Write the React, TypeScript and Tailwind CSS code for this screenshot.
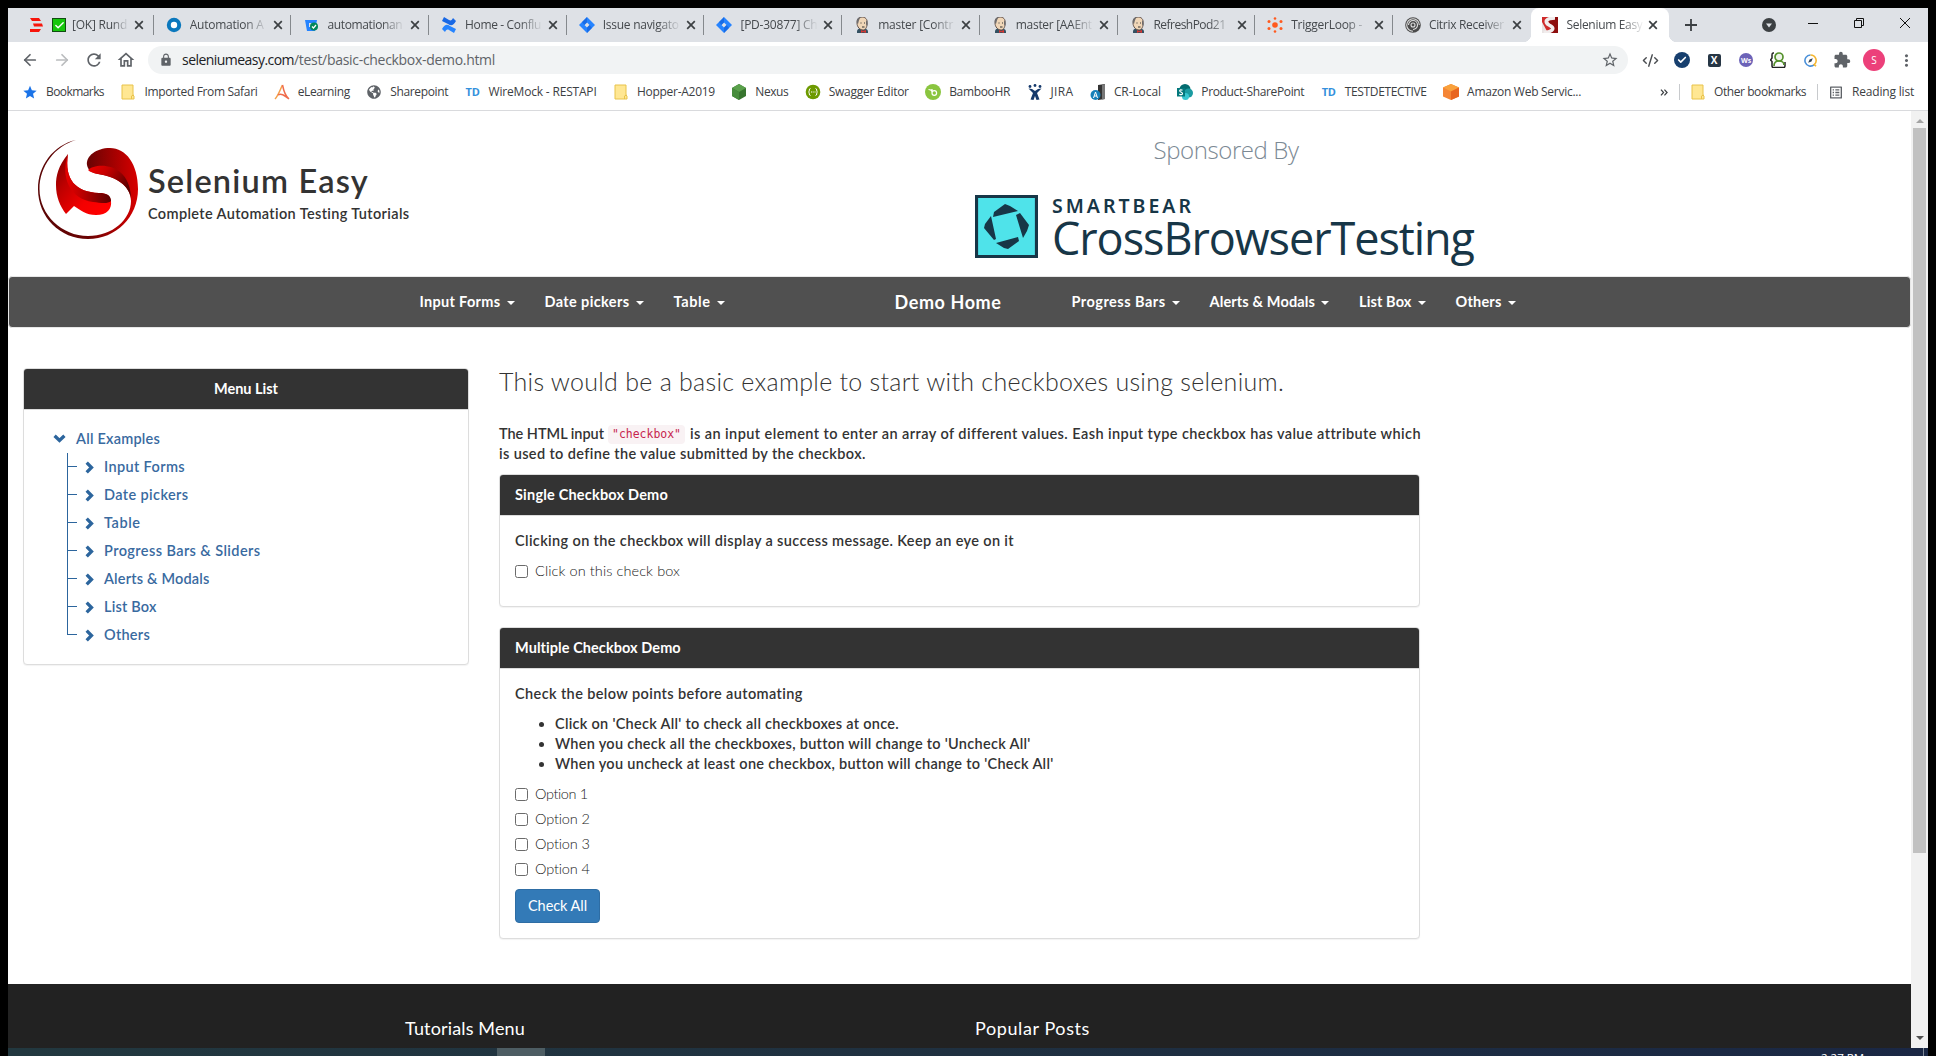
import { useLayoutEffect, useRef, type ReactNode } from "react";
import { ArrowLeft, ArrowRight, Check, CodeXml } from "lucide-react";
import { MdExtension, MdLock, MdMoreVert, MdOutlineHome, MdRefresh, MdStar, MdStarBorder, MdOutlineListAlt } from "react-icons/md";
import { FaGlobeAmericas } from "react-icons/fa";

/* One line of text whose tracking is adjusted so that it spans `w` pixels. */
function Fit({ w, className = "", children }: { w: number; className?: string; children: string }) {
  const ref = useRef<HTMLSpanElement>(null);
  useLayoutEffect(() => {
    const el = ref.current;
    if (!el) return;
    el.style.letterSpacing = "0px";
    const natural = el.getBoundingClientRect().width;
    el.style.letterSpacing = `${(w - natural) / children.length}px`;
  }, [w, children]);
  return (
    <span ref={ref} className={`inline-block whitespace-pre ${className}`}>
      {children}
    </span>
  );
}

/* ---------- favicons ---------- */

const Rundeck = () => (
  <svg viewBox="0 0 16 16" className="size-4">
    <path d="M2 1h9l2 3H4zM5 6.500h9l1 3H6zM2 12h11l-2 3H2z" fill="#f7150b" />
  </svg>
);
const Ring = () => (
  <svg viewBox="0 0 16 16" className="size-4">
    <circle cx="8" cy="8" r="5.200" fill="#fff" stroke="#0b78bd" strokeWidth="4" />
  </svg>
);
const Bitbucket = () => (
  <svg viewBox="0 0 16 16" className="size-4">
    <path d="M2 3h12l-2 11H4z" fill="#2684ff" />
    <path d="M6 6h4v4H6z" fill="#dee1e6" />
    <circle cx="11" cy="9.500" r="4" fill="#00875a" />
    <path d="m9 9.500 1.500 1.500 2.500-3" stroke="#fff" fill="none" strokeWidth="1.200" />
  </svg>
);
const Confluence = () => (
  <svg viewBox="0 0 16 16" className="size-4">
    <path d="M1 12c3-5 5-5 8-3l6 3-2 4-5-3c-2-1-3 0-4 2z" fill="#2684ff" />
    <path d="M15 4c-3 5-5 5-8 3L1 4l2-4 5 3c2 1 3 0 4-2z" fill="#1868e5" />
  </svg>
);
const JiraDiamond = () => (
  <svg viewBox="0 0 16 16" className="size-4">
    <path d="M8 0 16 8 8 16 0 8z" fill="#2684ff" />
    <path d="M8 5.500 10.500 8 8 10.500 5.500 8z" fill="#dee1e6" />
    <path d="M8 0v5.500L5.500 8 3 5zM8 16v-5.500L10.500 8 13 11z" fill="#0f5bd6" opacity=".6" />
  </svg>
);
const Jenkins = () => (
  <svg viewBox="0 0 16 16" className="size-4">
    <path d="M3 15c0-3 2-4 5-4s6 1 6 4v1H3z" fill="#335061" />
    <path d="M3 6c0-4 2-6 5-6s6 2 5 7c0 4-2 6-4 6-3 0-6-3-6-7z" fill="#f0d6b7" stroke="#5b4a42" strokeWidth=".9" />
    <path d="M3 6C2 2 4 0 8 0 5 1 5 4 4 7zM12 3c2 2 2 5 1 6l-1-2z" fill="#6d6b6d" />
    <path d="M6.500 6h1M10 6h1M8 10h2.500" stroke="#333" />
    <path d="m7 13 2 1 3-1v3l-3-1-2 1z" fill="#d33833" />
  </svg>
);
const Trigger = () => (
  <svg viewBox="0 0 16 16" className="size-4" fill="#ff5a1f">
    <circle cx="8" cy="8" r="2.800" />
    <circle cx="8" cy="1.500" r="1.300" />
    <circle cx="8" cy="14.500" r="1.300" />
    <circle cx="2" cy="4.500" r="1.500" />
    <circle cx="14" cy="4.500" r="1.500" />
    <circle cx="2" cy="11.500" r="1.500" />
    <circle cx="14" cy="11.500" r="1.500" />
  </svg>
);
const Citrix = () => (
  <svg viewBox="0 0 16 16" className="size-4">
    <circle cx="8" cy="8" r="7.800" fill="#4b4b4b" />
    <g fill="none" stroke="#ddd" strokeWidth="1.100">
      <circle cx="8" cy="8" r="2" />
      <path d="M3.500 8A4.500 4.500 0 1 1 8 12.500M8 14.300A6.300 6.300 0 1 1 14.300 8" />
    </g>
  </svg>
);
const SeleniumTab = () => (
  <svg viewBox="0 0 16 16" className="size-4">
    <path d="M0 0h16v16H0z" fill="#cf2b2b" />
    <path d="M6 0h10v16H9z" fill="#8d0d0d" />
    <path d="M0 5v11h6z" fill="#e9e4e4" />
    <path d="M13 1C4 1 2 5 7 8c6 3 5 6-5 8" fill="none" stroke="#f1eded" strokeWidth="3.600" />
  </svg>
);

const tabs: { icon: ReactNode; title: string; w: number; ok?: boolean }[] = [
  { icon: <Rundeck />, title: "[OK] Rund", w: 55, ok: true },
  { icon: <Ring />, title: "Automation A", w: 74 },
  { icon: <Bitbucket />, title: "automationan", w: 75 },
  { icon: <Confluence />, title: "Home - Conflu", w: 76 },
  { icon: <JiraDiamond />, title: "Issue navigato", w: 76 },
  { icon: <JiraDiamond />, title: "[PD-30877] Ch", w: 77 },
  { icon: <Jenkins />, title: "master [Contr", w: 75 },
  { icon: <Jenkins />, title: "master [AAEnt", w: 76 },
  { icon: <Jenkins />, title: "RefreshPod21", w: 72 },
  { icon: <Trigger />, title: "TriggerLoop -", w: 71 },
  { icon: <Citrix />, title: "Citrix Receiver", w: 75 },
];

const TabX = () => (
  <svg viewBox="0 0 10 10" className="size-[10px] shrink-0">
    <path d="m1.200 1.200 7.600 7.600m0-7.600L1.200 8.800" stroke="#3c4043" strokeWidth="1.700" />
  </svg>
);

function TabTitle({ w, children }: { w: number; children: string }) {
  return (
    <span className="flex-1 overflow-hidden text-[#45494d] [mask-image:linear-gradient(to_right,#000_70%,transparent_100%)]">
      <Fit w={w}>{children}</Fit>
    </span>
  );
}

function TabStrip() {
  return (
    <div className="flex h-[34px] bg-[#dee1e6] pl-[8px] text-[12px] leading-[34px]">
      {tabs.map((t, i) => (
        <div key={i} className="flex w-[137.700px] items-center pl-[12px]">
          <span className="shrink-0">{t.icon}</span>
          {t.ok && (
            <span className="ml-[8px] flex size-[14px] shrink-0 items-center justify-center border border-[#114d11] bg-[#16c60c]">
              <Check className="size-[11px] text-white" strokeWidth={3} />
            </span>
          )}
          <span className={t.ok ? "ml-[6px] flex w-[57px]" : "ml-[8px] flex w-[78px]"}>
            <TabTitle w={t.w}>{t.title}</TabTitle>
          </span>
          <span className="ml-[5px] mr-auto">
            <TabX />
          </span>
          {i < 10 && <span className="h-[20px] w-px bg-[#85898d]" />}
        </div>
      ))}
      <div className="relative flex w-[138px] items-center rounded-t-lg bg-white pl-[11px]">
        <span className="absolute bottom-0 left-[-8px] size-2 bg-[radial-gradient(circle_at_0_0,#dee1e6_8px,#fff_8.500px)]" />
        <span className="absolute bottom-0 right-[-8px] size-2 bg-[radial-gradient(circle_at_100%_0,#dee1e6_8px,#fff_8.500px)]" />
        <SeleniumTab />
        <span className="ml-[9px] flex w-[77px]">
          <TabTitle w={76}>Selenium Easy</TabTitle>
        </span>
        <span className="ml-[4px] flex">
          <TabX />
        </span>
      </div>
      <div className="flex flex-1 items-center">
        <svg viewBox="0 0 12 12" className="ml-[16px] size-3">
          <path d="M6 0v12M0 6h12" stroke="#3c4043" strokeWidth="1.800" />
        </svg>
        <svg viewBox="0 0 14 14" className="ml-[65px] size-[14px]">
          <circle cx="7" cy="7" r="7" fill="#3c4043" />
          <path d="M4 5.500h6L7 9.500z" fill="#dee1e6" />
        </svg>
        <svg viewBox="0 0 10 10" className="mb-[5px] ml-[32px] size-[10px]">
          <path d="M0 5.500h10" stroke="#111" />
        </svg>
        <svg viewBox="0 0 10 10" className="mb-[5px] ml-[36px] size-[10px]" fill="none" stroke="#111">
          <path d="M.5 2.500h7v7h-7zM2.500 2.500v-2h7v7h-2" />
        </svg>
        <svg viewBox="0 0 10 10" className="mb-[5px] ml-[36px] size-[10px]">
          <path d="m0 0 10 10M10 0 0 10" stroke="#111" />
        </svg>
      </div>
    </div>
  );
}

const extensions: ReactNode[] = [
  <CodeXml className="size-[17px] text-[#4a4d51]" />,
  <span className="flex size-4 items-center justify-center rounded-full bg-[#173f6e]">
    <Check className="size-[10px] text-white" strokeWidth={4} />
  </span>,
  <span className="flex size-[13px] items-center justify-center rounded-[2px] bg-[#263645] text-[10px] font-bold leading-none text-white">
    X
  </span>,
  <span className="flex size-[14px] items-center justify-center rounded-full bg-[#6c63b8] text-[7px] font-bold leading-none text-white">
    Ws
  </span>,
  <svg viewBox="0 0 16 16" className="size-4" fill="none">
    <path d="M4 1H3c-1 0-1 1-1 2v3L.5 8 2 9.500V14c0 1 .5 1.500 1.500 1.500H14c1 0 1-1 1-2V10" stroke="#222" strokeWidth="1.500" />
    <circle cx="9" cy="5" r="4" stroke="#55912c" strokeWidth="1.700" fill="#eef4ea" />
    <path d="M4 14c0-3 2-5 5-5s5 2 5 4" stroke="#55912c" strokeWidth="1.700" />
  </svg>,
  <svg viewBox="0 0 14 14" className="size-[13px]" fill="none" strokeWidth="1.700">
    <path d="M7 1a6 6 0 1 0 4 10.500" stroke="#4a90d9" />
    <path d="M7 1a6 6 0 0 1 4 10.500L13 13" stroke="#f5b731" />
    <path d="M9.500 4.500 8 8 4.500 9.500 6 6z" fill="#345" />
  </svg>,
  <MdExtension className="size-[18px]" />,
  <span className="flex size-[22px] items-center justify-center rounded-full bg-[#ec407a] text-[10px] leading-none text-white">
    S
  </span>,
  <MdMoreVert className="size-[19px]" />,
];

function Toolbar() {
  return (
    <div className="flex h-[36px] items-center pl-[13px] text-[#5f6368]">
      <ArrowLeft className="size-[18px]" strokeWidth={2.3} />
      <ArrowRight className="ml-[14px] size-[18px] text-[#babcbe]" strokeWidth={2.3} />
      <MdRefresh className="ml-[13px] size-[20px]" />
      <MdOutlineHome className="ml-[12px] size-[20px]" />
      <div className="ml-[12px] flex h-[28px] w-[1480px] items-center rounded-full bg-[#f1f3f4] pl-[11px] pr-[9px]">
        <MdLock className="size-[14px]" />
        <span className="ml-[9px] flex text-[14px] leading-[28px]">
          <Fit w={112} className="text-[#202124]">seleniumeasy.com</Fit>
          <Fit w={201}>/test/basic-checkbox-demo.html</Fit>
        </span>
        <MdStarBorder className="ml-auto size-[18px]" />
      </div>
      <div className="ml-[6px] flex">
        {extensions.map((e, i) => (
          <span key={i} className="flex w-8 items-center justify-center">
            {e}
          </span>
        ))}
      </div>
    </div>
  );
}

/* ---------- bookmarks ---------- */

const Folder = () => (
  <svg viewBox="0 0 16 16" className="size-4">
    <path d="M2 1h11v10l1 1v3H2z" fill="#ffe793" stroke="#e8c34a" />
    <path d="M11.500 15v-3l2-1" fill="none" stroke="#e8c34a" />
  </svg>
);
const ALetter = () => (
  <svg viewBox="0 0 16 16" className="size-4" fill="none" strokeWidth="1.500">
    <path d="M1 15C4 12 6 6 8.500 1" stroke="#f5a04a" />
    <path d="M8.500 1C9.500 6 11 12 15 15M4 11c3-2 6 0 11 4" stroke="#ef6c4d" />
  </svg>
);
const TD = () => <span className="flex w-4 justify-center text-[11px] font-bold tracking-tight text-[#3490dc]">TD</span>;
const Hexagon = () => (
  <svg viewBox="0 0 16 16" className="size-4">
    <path d="M8 0 15 4v8l-7 4-7-4V4z" fill="#38752f" />
    <path d="M8 0 15 4 8 8 1 4z" fill="#5aa04b" />
    <path d="M8 8v8l-7-4V4z" fill="#478c3c" />
  </svg>
);
const Swagger = () => (
  <svg viewBox="0 0 16 16" className="size-4">
    <circle cx="8" cy="8" r="7.300" fill="#6d9a00" />
    <path d="M5.500 4.500c-2 0-.5 3-2 3.500 1.500.5 0 3.500 2 3.500m5-7c2 0 .5 3 2 3.500-1.500.5 0 3.500-2 3.500M6 8h1m.7 0h1m.8 0h1" stroke="#fff" fill="none" />
  </svg>
);
const Bamboo = () => (
  <svg viewBox="0 0 16 16" className="size-4">
    <circle cx="8" cy="8" r="8" fill="#8ac53f" />
    <path d="M3.500 5.500c2 0 3 .5 3.500 2M7 5v4a2.300 2.300 0 1 0 2.300-2.300C8 6.700 7 7.500 7 9" stroke="#fff" strokeWidth="1.200" fill="none" />
  </svg>
);
const JiraOld = () => (
  <svg viewBox="0 0 16 16" className="size-4" fill="#15396b">
    <circle cx="3" cy="2.500" r="1.400" />
    <circle cx="8" cy="1.500" r="1.400" />
    <circle cx="13" cy="2.500" r="1.400" />
    <path d="M1.500 4.500 5 5l3 2 3-2 3.500-.5L10 9l2.500 6.500-3 .5L8 12l-1.500 4-3-.5L6 9z" />
  </svg>
);
const Server = () => (
  <svg viewBox="0 0 16 16" className="size-4">
    <path d="M8 1 15 0v15l-7 1z" fill="#333" />
    <path d="M12 1l3-1v15l-3 .5z" fill="#777" />
    <circle cx="5.500" cy="11" r="5" fill="#1580b8" />
    <path d="m3.500 14 2-6 2 6M4 12h3" stroke="#fff" fill="none" />
  </svg>
);
const SharePoint = () => (
  <svg viewBox="0 0 16 16" className="size-4">
    <circle cx="8" cy="5.500" r="5.500" fill="#036c70" />
    <circle cx="11.500" cy="9" r="4.500" fill="#1a9ba1" />
    <circle cx="8.500" cy="12.500" r="3.500" fill="#37c6d0" />
    <path d="M0 4h8v8.500H0z" fill="#03787c" />
    <path d="M5.500 6.200C4 5.300 2.500 6 2.700 7S5.500 8 5.500 9.500 3.500 11 2.400 10" stroke="#fff" fill="none" strokeWidth="1.200" />
  </svg>
);
const Cube = () => (
  <svg viewBox="0 0 16 16" className="size-4">
    <path d="M8 0 16 3.500v9L8 16 0 12.500v-9z" fill="#f58536" />
    <path d="M8 0 16 3.500 8 7.500 0 3.500z" fill="#f9a13b" />
    <path d="M8 7.500 16 3.500v9L8 16z" fill="#e8651f" />
  </svg>
);

const bookmarks: [ReactNode, string, number][] = [
  [<MdStar className="size-[17px] text-[#1a73e8]" />, "Bookmarks", 58],
  [<Folder />, "Imported From Safari", 113],
  [<ALetter />, "eLearning", 52],
  [<FaGlobeAmericas className="size-[14px]" />, "Sharepoint", 58],
  [<TD />, "WireMock - RESTAPI", 108],
  [<Folder />, "Hopper-A2019", 78],
  [<Hexagon />, "Nexus", 33],
  [<Swagger />, "Swagger Editor", 80],
  [<Bamboo />, "BambooHR", 61],
  [<JiraOld />, "JIRA", 23],
  [<Server />, "CR-Local", 47],
  [<SharePoint />, "Product-SharePoint", 103],
  [<TD />, "TESTDETECTIVE", 82],
  [<Cube />, "Amazon Web Servic...", 114],
];

function Bookmark({ icon, label, w }: { icon: ReactNode; label: string; w: number }) {
  return (
    <div className="flex items-center gap-2">
      <span className="flex w-4 justify-center text-[#5f6368]">{icon}</span>
      <Fit w={w}>{label}</Fit>
    </div>
  );
}

function BookmarksBar() {
  return (
    <div className="flex h-[33px] items-center border-b border-[#d9dadd] pb-[4px] pl-[14px] text-[12px] text-[#3c4043]">
      <div className="flex gap-[16.400px]">
        {bookmarks.map(([icon, label, w], i) => (
          <Bookmark key={i} icon={icon} label={label} w={w} />
        ))}
      </div>
      <svg viewBox="0 0 9 8" className="ml-[79px] h-[7px] w-[8px]" fill="none" stroke="#3c4043" strokeWidth="1.400">
        <path d="m1 .8 3 3.200-3 3.200M5 .8 8 4 5 7.200" />
      </svg>
      <span className="ml-[11px] h-4 w-px bg-[#c8cacd]" />
      <div className="ml-[10px]">
        <Bookmark icon={<Folder />} label="Other bookmarks" w={92} />
      </div>
      <span className="ml-[11px] h-4 w-px bg-[#c8cacd]" />
      <div className="ml-[10px]">
        <Bookmark icon={<MdOutlineListAlt className="size-[17px]" />} label="Reading list" w={62} />
      </div>
    </div>
  );
}

/* ---------- page ---------- */

function SeleniumLogo() {
  return (
    <svg viewBox="0 0 100 100" className="size-[100px]">
      <defs>
        <linearGradient id="ring" x1="0" x2="1">
          <stop offset="0" stopColor="#5a0505" />
          <stop offset=".5" stopColor="#6a0303" />
          <stop offset=".85" stopColor="#b80000" />
          <stop offset="1" stopColor="#d80000" />
        </linearGradient>
        <linearGradient id="band" x1="0" x2="1" y2=".5">
          <stop offset="0" stopColor="#f00000" />
          <stop offset=".4" stopColor="#c80000" />
          <stop offset="1" stopColor="#5c0000" />
        </linearGradient>
        <linearGradient id="low" x1="0" x2="1" y2=".8">
          <stop offset="0" stopColor="#7a0000" />
          <stop offset=".35" stopColor="#c00000" />
          <stop offset=".7" stopColor="#f40000" />
          <stop offset="1" stopColor="#ff0000" />
        </linearGradient>
        <linearGradient id="fold" x1="0" x2="1">
          <stop offset="0" stopColor="#e80000" />
          <stop offset=".45" stopColor="#b00000" />
          <stop offset="1" stopColor="#5a0000" />
        </linearGradient>
      </defs>
      <path
        d="M38 1C15 6 0 27 0 50c0 28 22 50 50 50s50-22 50-50C100 25 88 9 72 9 58 9 48 17 49 26c1 6 6 8 11 9 20 3 33 13 33 27 0 18-18 35-43 35C24 97 1.500 76 1.500 50 1.500 27 17 7 38 1Z"
        fill="url(#ring)"
      />
      <path d="M50 31c8-8 42-8 43 28-3-15-18-22-33-24-4-.5-8-2-10-4Z" fill="url(#band)" />
      <path d="M30 15C20 27 18 37 18 46c0 12 4 21 10 29l8-8c6 4 12 9 22 9 11 0 16-6 15-14-1-6-5-8-12-8C38 53 26 41 30 15Z" fill="url(#low)" />
      <path d="M30 15C22 38 32 60 55 63c8 1 15 2 18-1 0-6-5-8-12-8C38 53 26 41 30 15Z" fill="url(#fold)" />
    </svg>
  );
}

function SmartBearMark() {
  return (
    <svg viewBox="0 0 63 63" className="size-[63px]">
      <path d="M1.500 1.500h60v60h-60z" fill="#4fe3ea" stroke="#173647" strokeWidth="3.200" />
      <path
        d="m18 22 1-5 11-8 5 2 8 5zM41 20l4-2 9 12-2 6-4 7zM21 48l22-6 1 4-11 8-4-1zM16 21l5 23-2 1L9 33l1-4z"
        fill="#173647"
      />
    </svg>
  );
}

function Header() {
  return (
    <header className="flex h-[165px] items-start pl-[30px]">
      <div className="pt-[28px]">
        <SeleniumLogo />
      </div>
      <div className="ml-[10px] w-[827px] pt-[51px] text-[#333]">
        <h1 className="h-[38px] text-[32.500px] font-semibold leading-[38px]">
          <Fit w={221}>Selenium Easy</Fit>
        </h1>
        <p className="mt-[4px] text-[14.500px] font-semibold leading-[20px]">
          <Fit w={262}>Complete Automation Testing Tutorials</Fit>
        </p>
      </div>
      <div className="font-['Open_Sans']">
        <p className="flex h-[60px] w-[502px] justify-center pt-[23px] text-[24px] font-light leading-[32px] text-[#7b8994]">
          <Fit w={145}>Sponsored By</Fit>
        </p>
        <div className="mt-[24px] flex text-[#173647]">
          <SmartBearMark />
          <div className="ml-[14px] flex flex-col items-start">
            <Fit w={142} className="h-[22px] font-['Noto_Sans'] text-[19.500px] font-semibold leading-[22px]">
              SMARTBEAR
            </Fit>
            <Fit w={422} className="mt-[-4px] h-[50px] text-[45px] leading-[50px]">
              CrossBrowserTesting
            </Fit>
          </div>
        </div>
      </div>
    </header>
  );
}

const leftNav: [string, number][] = [
  ["Input Forms", 81],
  ["Date pickers", 85],
  ["Table", 37],
];
const rightNav: [string, number][] = [
  ["Progress Bars", 94],
  ["Alerts & Modals", 105.5],
  ["List Box", 52.5],
  ["Others", 46],
];

function NavItems({ items }: { items: [string, number][] }) {
  return (
    <ul className="flex gap-[30px] text-[14.500px] font-bold">
      {items.map(([label, w]) => (
        <li key={label} className="flex items-center gap-[6px]">
          <Fit w={w}>{label}</Fit>
          <span className="mt-[2px] border-x-4 border-t-4 border-x-transparent border-t-white" />
        </li>
      ))}
    </ul>
  );
}

function NavBar() {
  return (
    <nav className="flex h-[52px] items-center rounded-[4px] border border-[#e7e7e7] bg-[#505050] pl-[410.500px] leading-[20px] text-white">
      <NavItems items={leftNav} />
      <Fit w={107} className="ml-[170px] text-[18px] font-bold">
        Demo Home
      </Fit>
      <div className="ml-[70px]">
        <NavItems items={rightNav} />
      </div>
    </nav>
  );
}

const menu: [string, number][] = [
  ["Input Forms", 81],
  ["Date pickers", 84.5],
  ["Table", 36.5],
  ["Progress Bars & Sliders", 156.5],
  ["Alerts & Modals", 105.5],
  ["List Box", 52.5],
  ["Others", 46],
];

function Panel({ title, w, center, className, children }: { title: string; w: number; center?: boolean; className: string; children: ReactNode }) {
  return (
    <section className={`overflow-hidden rounded-[4px] border border-[#ddd] bg-white shadow-[0_1px_1px_rgba(0,0,0,0.05)] ${className}`}>
      <h3
        className={`h-[41px] border-b border-[#ddd] bg-[#333] px-[15px] text-[14.500px] font-bold leading-[40px] text-white ${center ? "text-center" : ""}`}
      >
        <Fit w={w}>{title}</Fit>
      </h3>
      {children}
    </section>
  );
}

function Sidebar() {
  return (
    <Panel title="Menu List" w={64} center className="mt-[40px] h-[297px] w-[446px]">
      <div className="pl-[29px] pt-[15px] font-semibold text-[#396a9f]">
        <div className="flex h-7 items-center">
          <svg viewBox="0 0 13 9" className="mb-[2px] h-[9px] w-[13px]">
            <path d="m1.600 1.700 4.900 4.800 4.900-4.800" fill="none" stroke="#2c659d" strokeWidth="3.300" />
          </svg>
          <Fit w={84} className="ml-[10px]">
            All Examples
          </Fit>
        </div>
        <ul className="ml-[14px]">
          {menu.map(([label, w], i) => (
            <li key={label} className="flex h-7 items-center">
              <span className="flex h-7 w-[10px] flex-col">
                <span className="h-[14px] border-b border-l border-[#2c659d]" />
                <span className={i < menu.length - 1 ? "h-[14px] border-l border-[#2c659d]" : "h-[14px]"} />
              </span>
              <svg viewBox="0 0 9 13" className="ml-[8px] h-[13px] w-[9px]">
                <path d="M1.700 1.600 6.500 6.500l-4.800 4.900" fill="none" stroke="#2c659d" strokeWidth="3.300" />
              </svg>
              <Fit w={w} className="ml-[10px]">
                {label}
              </Fit>
            </li>
          ))}
        </ul>
      </div>
    </Panel>
  );
}

function CheckRow({ label, w }: { label: string; w: number }) {
  return (
    <label className="flex h-5 items-center gap-[7px] font-light text-[#222]">
      <input type="checkbox" className="size-[13px] appearance-none rounded-[2.500px] border border-[#6b6b6b] bg-white" />
      <Fit w={w}>{label}</Fit>
    </label>
  );
}

function Main() {
  return (
    <main className="ml-[30px] w-[920px] font-semibold text-[#333]">
      <h2 className="h-[26px] text-[25px] font-light leading-[26px]">
        <Fit w={785}>This would be a basic example to start with checkboxes using selenium.</Fit>
      </h2>
      <div className="mt-[30px] whitespace-nowrap">
        <p className="flex h-5 items-center">
          <Fit w={105}>The HTML input</Fit>
          <code className="ml-[4px] mr-[5px] flex h-[19px] items-center rounded-[4px] bg-[#f9f2f4] px-[4px] font-['DejaVu_Sans_Mono'] text-[11.500px] font-normal text-[#c7254e]">
            <Fit w={69}>"checkbox"</Fit>
          </code>
          <Fit w={730}>is an input element to enter an array of different values. Eash input type checkbox has value attribute which</Fit>
        </p>
        <p className="h-5">
          <Fit w={366}>is used to define the value submitted by the checkbox.</Fit>
        </p>
      </div>
      <Panel title="Single Checkbox Demo" w={153} className="mt-[10px] h-[133px] w-[921px]">
        <div className="px-[15px] pt-[15px]">
          <p className="mb-[10px] h-5">
            <Fit w={499}>Clicking on the checkbox will display a success message. Keep an eye on it</Fit>
          </p>
          <CheckRow label="Click on this check box" w={145} />
        </div>
      </Panel>
      <Panel title="Multiple Checkbox Demo" w={166} className="mt-[20px] h-[312px] w-[921px]">
        <div className="px-[15px] pt-[15px]">
          <p className="h-5">
            <Fit w={288}>Check the below points before automating</Fit>
          </p>
          <ul className="mb-[10px] mt-[10px] list-disc pl-[40px]">
            <li className="h-5">
              <Fit w={344}>Click on 'Check All' to check all checkboxes at once.</Fit>
            </li>
            <li className="h-5">
              <Fit w={475}>When you check all the checkboxes, button will change to 'Uncheck All'</Fit>
            </li>
            <li className="h-5">
              <Fit w={498}>When you uncheck at least one checkbox, button will change to 'Check All'</Fit>
            </li>
          </ul>
          <div className="flex flex-col gap-[5px]">
            <CheckRow label="Option 1" w={53} />
            <CheckRow label="Option 2" w={55} />
            <CheckRow label="Option 3" w={55} />
            <CheckRow label="Option 4" w={55} />
          </div>
          <button className="mt-[10px] flex h-[34px] w-[85px] items-center justify-center rounded-[4px] border border-[#2e6da4] bg-[#337ab7] font-normal text-white">
            <Fit w={59}>Check All</Fit>
          </button>
        </div>
      </Panel>
    </main>
  );
}

function ScrollBar() {
  return (
    <div className="flex w-[17px] flex-col items-center bg-[#f1f1f1]">
      <span className="mt-[8px] border-x-[4px] border-b-[4px] border-x-transparent border-b-[#a3a3a3]" />
      <span className="mt-[5px] h-[725px] w-[13px] bg-[#c1c1c1]" />
      <span className="mb-[8px] mt-auto border-x-[4px] border-t-[4px] border-x-transparent border-t-[#505050]" />
    </div>
  );
}

export default function App() {
  return (
    <div className="flex h-[1056px] w-[1936px] flex-col overflow-hidden bg-black px-2 pt-2 font-['Open_Sans',sans-serif]">
      <div className="bg-white">
        <TabStrip />
        <Toolbar />
        <BookmarksBar />
      </div>
      <div className="flex h-[937px] bg-white">
        <div className="flex w-[1903px] flex-col font-['Lato',sans-serif] text-[14.500px] leading-[20px]">
          <Header />
          <NavBar />
          <div className="flex h-[656px] items-start pl-[15px]">
            <Sidebar />
            <div className="pt-[40px]">
              <Main />
            </div>
          </div>
          <footer className="flex h-[64px] bg-[#222] pl-[397px] pt-[34px] text-[18px] leading-[20px] text-white">
            <div className="w-[570px]">
              <Fit w={120}>Tutorials Menu</Fit>
            </div>
            <Fit w={115}>Popular Posts</Fit>
          </footer>
        </div>
        <ScrollBar />
      </div>
      <div className="flex h-2 items-start overflow-hidden bg-linear-to-r from-[#22383f] via-[#1f3040] to-[#1a2744]">
        <span className="ml-[489px] h-2 w-[48px] bg-[#4d5d63]" />
        <span className="ml-auto mr-[59px] pt-[3px] text-[11.500px] leading-[14px] text-white">
          <Fit w={43}>2:27 PM</Fit>
        </span>
        <span className="mr-[4px] h-2 w-px bg-[#7d8796]" />
      </div>
    </div>
  );
}
